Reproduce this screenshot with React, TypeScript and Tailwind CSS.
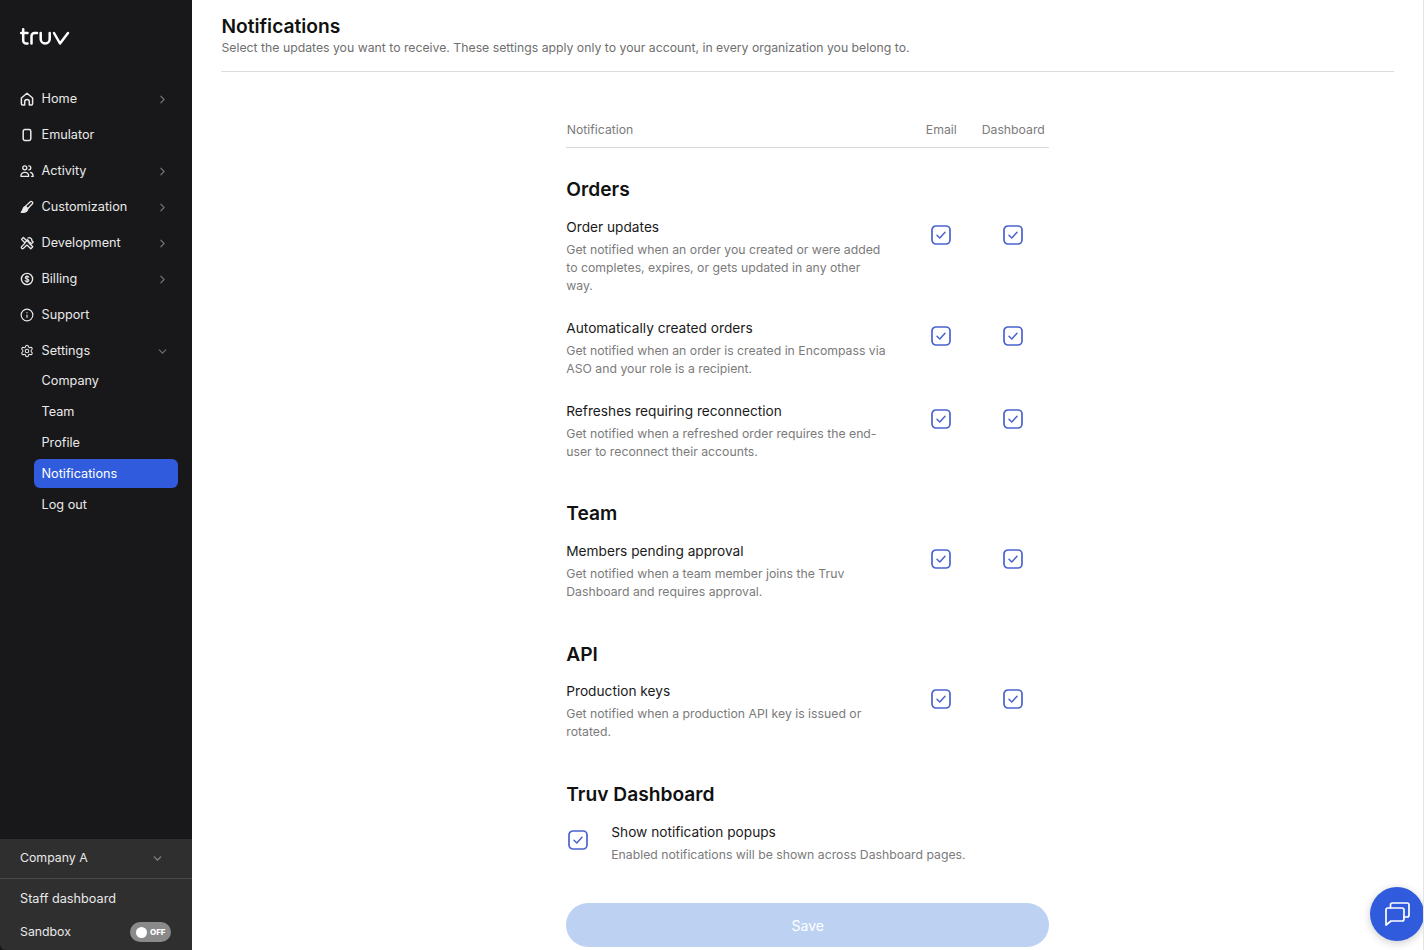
import React from "react";
import { ChevronDown, ChevronRight, Info, Settings } from "lucide-react";

const font = "font-['Inter',sans-serif]";

const HomeIcon = () => (
  <svg width="14" height="14" viewBox="0 0 14 14" fill="none" stroke="currentColor" strokeWidth="1.5" strokeLinejoin="round" strokeLinecap="round">
    <path d="M1.400 6 7 1.300 12.600 6v5.800a1.200 1.200 0 0 1-1.200 1.200H9.300V9.800a2.300 2.300 0 0 0-4.600 0V13H2.600a1.200 1.200 0 0 1-1.200-1.200z" />
  </svg>
);

const PhoneIcon = () => (
  <svg width="14" height="14" viewBox="0 0 14 14" fill="none" stroke="currentColor" strokeWidth="1.5">
    <rect x="3.200" y="1.500" width="7.600" height="11" rx="1.700" />
  </svg>
);

const PeopleIcon = () => (
  <svg width="14" height="14" viewBox="0 0 14 14" fill="none" stroke="currentColor" strokeWidth="1.300" strokeLinecap="round">
    <circle cx="4.800" cy="3.800" r="2" />
    <path d="M8.800 1.800a2 2 0 0 1 0 4" />
    <path d="M.9 12.300c0-2.700 1.700-4 3.900-4s3.900 1.300 3.900 4z" strokeLinejoin="round" />
    <path d="M10.500 8.400c1.500.4 2.600 1.800 2.600 3.900h-1.500" />
  </svg>
);

const BrushIcon = () => (
  <svg width="14" height="14" viewBox="0 0 14 14" fill="none" stroke="currentColor" strokeWidth="1.300" strokeLinejoin="round">
    <path d="M5.400 6.400 10.300 1.700a1.500 1.500 0 0 1 2.100 2.100L7.700 8.700z" />
    <path d="M5.400 6.400C3.800 6.800 3.200 8 2.900 9.400c-.2 1-.8 2-1.700 2.800 2 .4 4.100 0 5.300-1 .9-.8 1.300-1.600 1.200-2.500z" fill="currentColor" />
  </svg>
);

const ToolsIcon = () => (
  <svg width="14" height="14" viewBox="0 0 14 14" fill="none" stroke="currentColor" strokeWidth="1.300" strokeLinejoin="round" strokeLinecap="round">
    <path d="M1.500 3.400 3.400 1.500l3.300 3.300-1.900 1.900z" />
    <path d="M8 2a2.600 2.600 0 0 1 3.800 2.800l1.400 1.300-1.700 1.700-1.300-1.300A2.600 2.600 0 0 1 7.200 3.600L9 5.200" />
    <path d="M7.200 9.200l3.600 3.600 2-2L9.200 7.200" />
    <path d="M4.800 7.400 1.500 10.700a1.300 1.300 0 0 0 1.800 1.800L6.600 9.200" />
  </svg>
);

const DollarIcon = () => (
  <svg width="14" height="14" viewBox="0 0 14 14" fill="none" stroke="currentColor" strokeWidth="1.400" strokeLinecap="round">
    <circle cx="7" cy="7" r="5.600" />
    <path d="M8.800 5.300C8.500 4.700 7.800 4.400 7 4.400c-1 0-1.800.5-1.800 1.300C5.200 7.400 8.900 6.500 8.900 8.300c0 .8-.9 1.300-1.900 1.300-.8 0-1.600-.3-1.900-1M7 3.500v7" strokeWidth="1.100" />
  </svg>
);

const CheckBox = () => (
  <svg width="20" height="20" viewBox="0 0 20 20" fill="none" className="shrink-0">
    <rect x="1" y="1" width="18" height="18" rx="4" stroke="#4a63cf" strokeWidth="1.700" />
    <path d="M6 10.300 8.800 13 14 7.200" stroke="#4a63cf" strokeWidth="1.500" strokeLinecap="round" strokeLinejoin="round" />
  </svg>
);

const ChatIcon = () => (
  <svg width="28" height="28" viewBox="0 0 28 28" fill="none" stroke="#fff" strokeWidth="1.700" strokeLinejoin="round" strokeLinecap="round">
    <path d="M3 10a2 2 0 0 1 2-2h14a2 2 0 0 1 2 2v9a2 2 0 0 1-2 2H8L3 25z" />
    <path d="M7.500 8V5a2 2 0 0 1 2-2H24a2 2 0 0 1 2 2v10a2 2 0 0 1-2 2h-3" />
  </svg>
);

const navItems = [
  { label: "Home", icon: <HomeIcon />, chevron: true },
  { label: "Emulator", icon: <PhoneIcon />, chevron: false },
  { label: "Activity", icon: <PeopleIcon />, chevron: true },
  { label: "Customization", icon: <BrushIcon />, chevron: true },
  { label: "Development", icon: <ToolsIcon />, chevron: true },
  { label: "Billing", icon: <DollarIcon />, chevron: true },
  { label: "Support", icon: <Info size={14} strokeWidth={2} />, chevron: false },
];

const subItems = ["Company", "Team", "Profile", "Notifications", "Log out"];

const sections = [
  {
    title: "Orders",
    pad: "pt-[29px]",
    gap: "mt-[16px]",
    rows: [
      {
        title: "Order updates",
        text: "Get notified when an order you created or were added to completes, expires, or gets updated in any other way.",
      },
      {
        title: "Automatically created orders",
        text: "Get notified when an order is created in Encompass via ASO and your role is a recipient.",
      },
      {
        title: "Refreshes requiring reconnection",
        text: "Get notified when a refreshed order requires the end-user to reconnect their accounts.",
      },
    ],
  },
  {
    title: "Team",
    pad: "pt-[40px]",
    gap: "mt-[16px]",
    rows: [
      {
        title: "Members pending approval",
        text: "Get notified when a team member joins the Truv Dashboard and requires approval.",
      },
    ],
  },
  {
    title: "API",
    pad: "pt-[41px]",
    gap: "mt-[15px]",
    rows: [
      {
        title: "Production keys",
        text: "Get notified when a production API key is issued or rotated.",
      },
    ],
  },
];

function Sidebar() {
  return (
    <aside className="w-[192px] h-[950px] shrink-0 bg-[#18181a] flex flex-col text-[#e9e9e9] text-[12.700px]">
      <div className="pl-5 pt-[28px] h-[81px] text-white">
        <svg width="50" height="18" viewBox="0 0 50 18" fill="none" stroke="currentColor" strokeWidth="2.500" strokeLinecap="round" strokeLinejoin="round">
          <path d="M1.200 5H7.500M3.200 1.300V12.500a3 3 0 0 0 3 3H7.500" />
          <path d="M11.500 15.500V8a3 3 0 0 1 3-3H17" />
          <path d="M20.700 5v6a4.500 4.500 0 0 0 9 0V5" />
          <path d="M34 5l6 10.500L48 5" />
        </svg>
      </div>
      <nav className="flex flex-col">
        {navItems.map((item) => (
          <div key={item.label} className="h-9 flex items-center pl-[20px] pr-[23px]">
            <span className="w-[14px] flex justify-center">{item.icon}</span>
            <span className="ml-[7.500px] flex-1">{item.label}</span>
            {item.chevron && <ChevronRight size={13} strokeWidth={2.200} className="text-[#6f6f6f]" />}
          </div>
        ))}
        <div className="h-9 flex items-center pl-[20px] pr-[23px]">
          <Settings size={14} strokeWidth={1.800} />
          <span className="ml-[7.500px] flex-1">Settings</span>
          <ChevronDown size={13} strokeWidth={2.200} className="text-[#6f6f6f]" />
        </div>
        <div className="flex flex-col pl-[34px] pr-[14px] mt-[-3px] gap-[2px]">
          {subItems.map((label) => (
            <div
              key={label}
              className={
                label === "Notifications"
                  ? "h-[29px] flex items-center pl-[7.500px] rounded-md bg-[#2f5bdc] text-white"
                  : "h-[29px] flex items-center pl-[7.500px]"
              }
            >
              {label}
            </div>
          ))}
        </div>
      </nav>
      <div className="mt-auto h-[111px] bg-[#2f2f2f] rounded-bl-md flex flex-col">
        <div className="h-[40px] flex items-center justify-between pl-5 pr-[28px] border-b border-[#4a4a4a]">
          <span className="text-[12.300px]">Company A</span>
          <ChevronDown size={13} strokeWidth={2.200} className="text-[#8a8a8a]" />
        </div>
        <div className="pl-5 pr-[21px] pt-[11px]">
          <div className="h-[18px] flex items-center">Staff dashboard</div>
          <div className="mt-[14px] h-[20px] flex items-center justify-between">
            <span className="text-[12.300px]">Sandbox</span>
            <span className="w-[41px] h-[20px] rounded-full bg-[#8a8a8a] flex items-center pl-[6px] gap-[3px]">
              <span className="w-[11px] h-[11px] rounded-full bg-white" />
              <span className="text-[8px] font-extrabold text-white">OFF</span>
            </span>
          </div>
        </div>
      </div>
    </aside>
  );
}

function Row({ title, text }: { title: string; text: string }) {
  return (
    <div className="flex items-start">
      <div className="w-[339px] pr-[17px]">
        <p className="text-[13.700px] leading-[20px] text-[#1a1a1a]">{title}</p>
        <p className="mt-[4px] text-[12.250px] leading-[18px] text-[#7b7b7b]">{text}</p>
      </div>
      <div className="w-[72px] flex justify-center pt-[8px]">
        <CheckBox />
      </div>
      <div className="w-[72px] flex justify-center pt-[8px]">
        <CheckBox />
      </div>
    </div>
  );
}

export default function App() {
  return (
    <div className={`relative w-[1424px] h-[950px] overflow-hidden flex bg-white border-r border-[#e4e4e4] ${font}`}>
      <Sidebar />
      <main className="flex-1 pl-[29.500px] pr-[29px] pt-[14px]">
        <header className="h-[58px] ml-[-0.500px] pl-[0.500px] border-b border-[#dcdcdc]">
          <h1 className="text-[19.200px] leading-[24px] font-semibold text-[#111]">Notifications</h1>
          <p className="mt-[1px] text-[12.250px] leading-[18px] text-[#6f6f6f]">
            Select the updates you want to receive. These settings apply only to your account, in every organization you belong to.
          </p>
        </header>
        <div className="w-[483px] mx-auto pt-[47px]">
          <div className="flex items-center h-[29px] border-b border-[#d8d8d8] text-[12.250px] text-[#7b7b7b] pb-[6px]">
            <span className="w-[339px] pl-[0.500px]">Notification</span>
            <span className="w-[72px] text-center">Email</span>
            <span className="w-[72px] text-center">Dashboard</span>
          </div>
          {sections.map((section) => (
            <section key={section.title} className={section.pad}>
              <h2 className="text-[19.200px] leading-[24px] font-semibold text-[#111]">{section.title}</h2>
              <div className={`${section.gap} flex flex-col gap-[23px]`}>
                {section.rows.map((row) => (
                  <Row key={row.title} title={row.title} text={row.text} />
                ))}
              </div>
            </section>
          ))}
          <section className="pt-[41px]">
            <h2 className="text-[19.200px] leading-[24px] font-semibold text-[#111]">Truv Dashboard</h2>
            <div className="mt-[16px] flex items-start">
              <div className="w-[45px] pl-[2px] pt-[8px]">
                <CheckBox />
              </div>
              <div>
                <p className="text-[13.700px] leading-[20px] text-[#1a1a1a]">Show notification popups</p>
                <p className="mt-[4px] text-[12.250px] leading-[18px] text-[#7b7b7b]">
                  Enabled notifications will be shown across Dashboard pages.
                </p>
              </div>
            </div>
          </section>
          <button className="mt-[39px] w-full h-[44px] rounded-full bg-[#bdd2f2] text-white text-[14px]">Save</button>
        </div>
      </main>
      <button className="absolute left-[1370px] top-[887px] w-[54px] h-[54px] rounded-full bg-[#2f5bdc] flex items-center justify-center shadow-[0_2px_8px_rgba(0,0,0,0.2)]">
        <ChatIcon />
      </button>
    </div>
  );
}
